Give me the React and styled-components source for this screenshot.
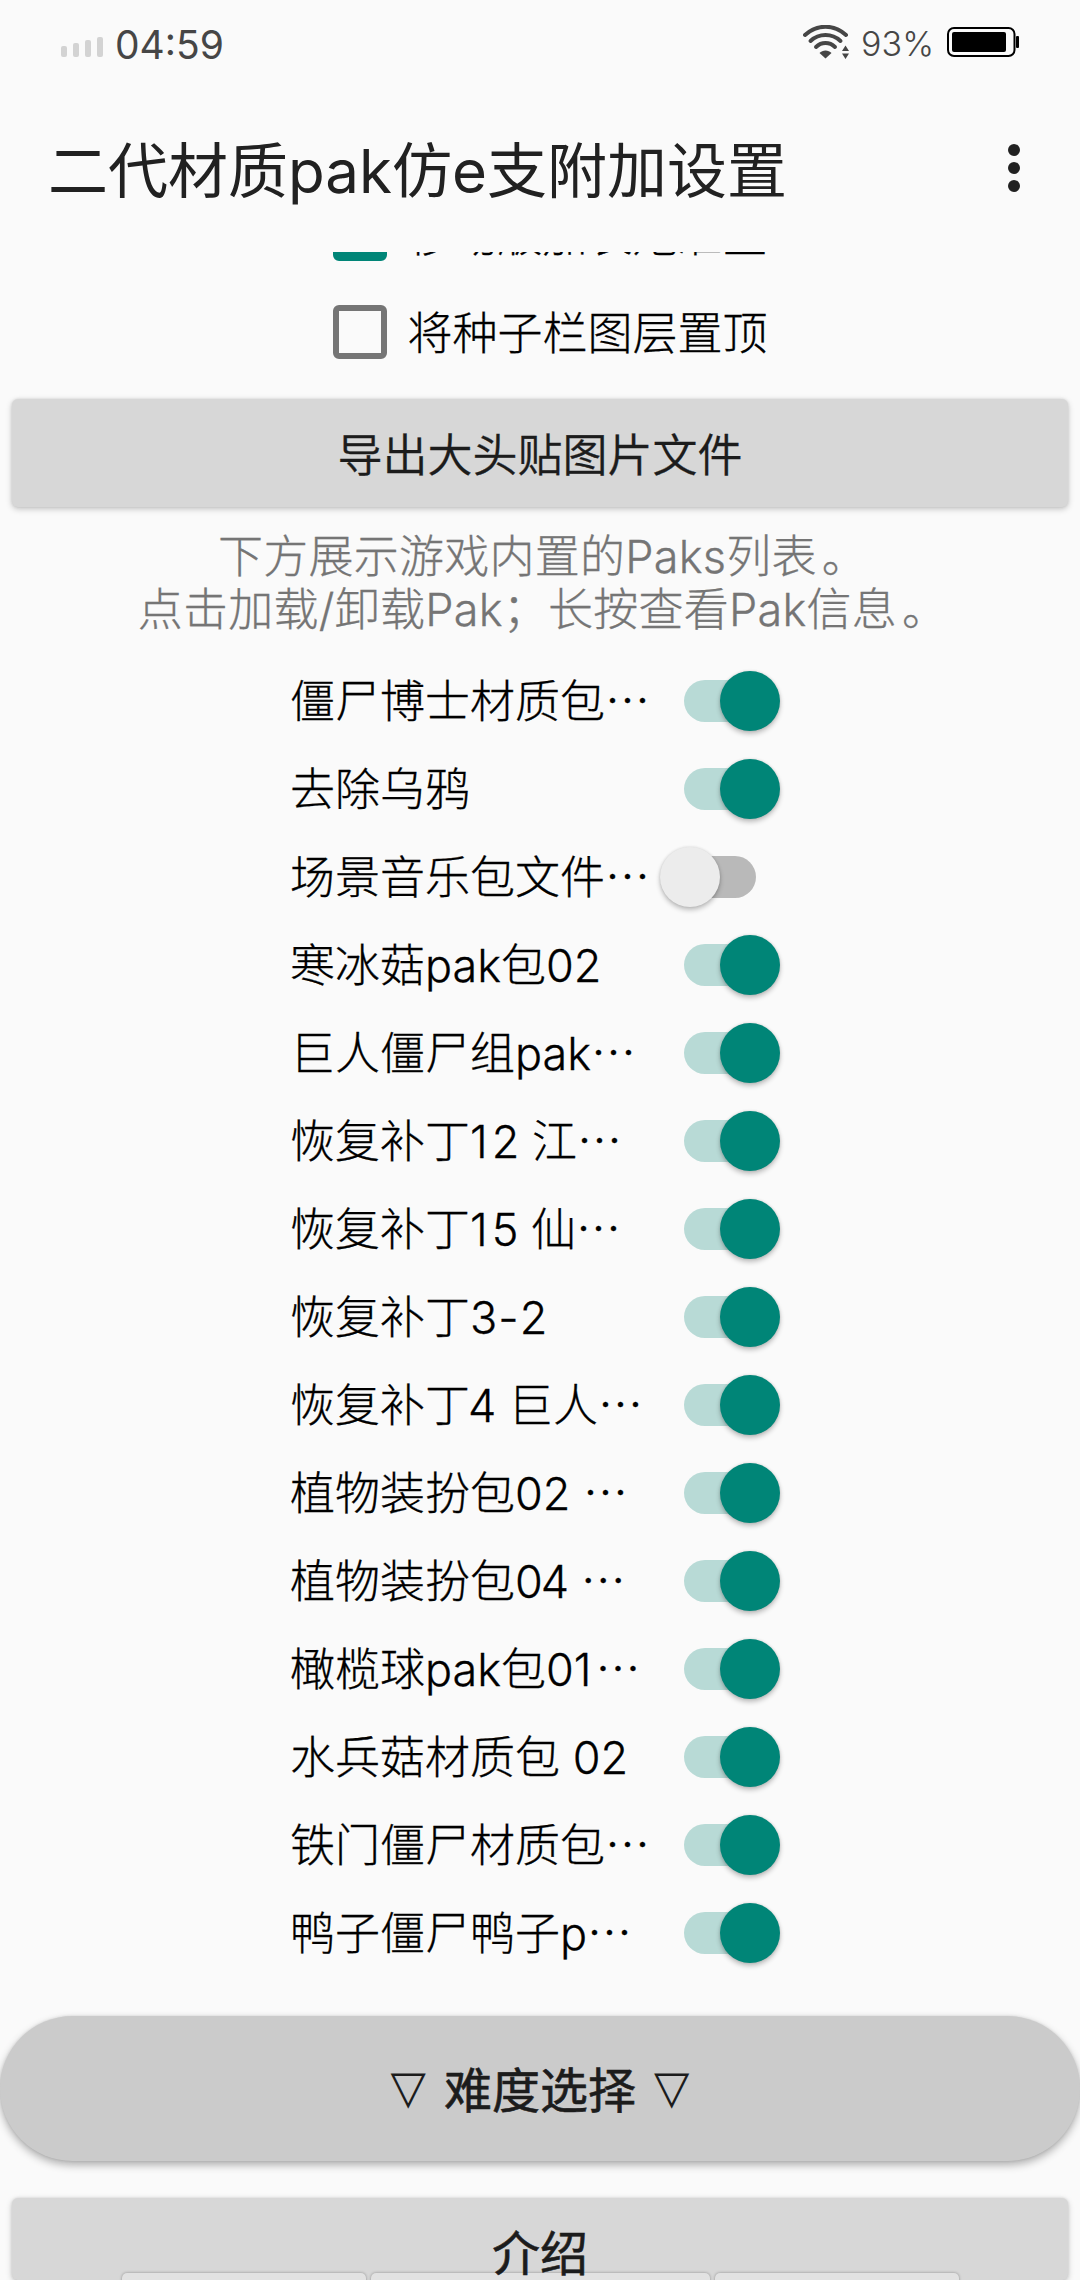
import React from 'react';
import styled, { createGlobalStyle } from 'styled-components';

const Global = createGlobalStyle`
  * { box-sizing: border-box; }
  html, body { margin: 0; padding: 0; background: #fafafa; }
  body { overflow: hidden; }
  button { font: inherit; border: 0; padding: 0; margin: 0; color: inherit; background: none; }
`;

const Screen = styled.div`
  width: 1080px;
  height: 2280px;
  display: flex;
  flex-direction: column;
  overflow: hidden;
  background: #fafafa;
  color: #000;
  font-family: Inter, 'Noto Sans CJK SC', sans-serif;
  font-weight: 300;
  font-size: 45px;
`;

const StatusBar = styled.header`
  flex: none;
  height: 84px;
  padding: 0 60px 0 61px;
  display: flex;
  align-items: center;
  justify-content: space-between;
  color: #464646;
`;

const StatusGroup = styled.div`
  display: flex;
  align-items: center;
`;

const Clock = styled.span`
  margin-left: 11px;
  padding-top: 5px;
  font-size: 39px;
  line-height: 48px;
  font-weight: 400;
`;

const Percent = styled.span`
  margin: 3px 13px 0 11px;
  font-size: 34px;
  line-height: 40px;
  font-weight: 350;
`;

const TitleBar = styled.div`
  flex: none;
  height: 168px;
  padding: 0 60px 0 48px;
  display: flex;
  align-items: center;
  justify-content: space-between;
  color: #212121;
`;

const Title = styled.h1`
  margin: 0;
  padding-top: 6px;
  font-size: 60px;
  font-weight: 400;
  line-height: 80px;
`;

const Overflow = styled.button`
  display: flex;
  flex-direction: column;
  gap: 6px;
`;

const Dot = styled.i`
  width: 12px;
  height: 12px;
  border-radius: 50%;
  background: #212121;
`;

const Viewport = styled.main`
  flex: 1;
  min-height: 0;
  overflow: hidden;
  display: flex;
  flex-direction: column;
`;

const Options = styled.div`
  flex: none;
  margin-top: -67px;
  display: flex;
  flex-direction: column;
  align-items: center;
`;

const Option = styled.label`
  height: 98px;
  width: 435px;
  display: flex;
  align-items: center;
  line-height: 60px;
  white-space: nowrap;
`;

const OptionText = styled.span`
  padding-top: 4px;
  -webkit-text-stroke: 0.3px currentColor;
`;

const Box = styled.span`
  flex: none;
  width: 54px;
  height: 54px;
  margin: 0 21px 0 10px;
  border-radius: 6px;
  border: 6px solid ${(p) => (p.$checked ? '#008577' : '#757575')};
  background: ${(p) => (p.$checked ? '#008577' : 'transparent')};
`;

const FlatButton = styled.button`
  flex: none;
  width: 1056px;
  height: ${(p) => p.$height}px;
  margin: ${(p) => p.$top}px 12px 0;
  border-radius: 6px;
  background: #d7d7d7;
  color: #1c1c1c;
  font-size: ${(p) => p.$size || 45}px;
  font-weight: ${(p) => p.$weight || 350};
  line-height: 64px;
  box-shadow: 0 2px 6px rgba(0, 0, 0, 0.22), 0 0 3px rgba(0, 0, 0, 0.1);
  display: flex;
  flex-direction: column;
  align-items: center;
`;

const ButtonLabel = styled.span`
  position: relative;
  z-index: 1;
  margin-top: ${(p) => p.$top}px;
  -webkit-text-stroke: ${(p) => p.$stroke}px currentColor;
`;

const Hint = styled.p`
  flex: none;
  margin: 23px 0 0;
  text-align: center;
  line-height: 53px;
  letter-spacing: 0.25px;
  color: #757575;
  -webkit-text-stroke: 0.3px currentColor;
`;

const FullStop = styled.span`
  margin: 0 -5px 0 5px;
`;

const PakList = styled.ul`
  flex: none;
  list-style: none;
  margin: 21px 0 0;
  padding: 0 0 0 290px;
`;

const PakRow = styled.li`
  height: 88px;
  display: flex;
  align-items: center;
`;

const PakName = styled.span`
  width: 370px;
  padding-top: 2px;
  line-height: 60px;
  white-space: pre;
  -webkit-text-stroke: 0.3px currentColor;
`;

const Glyph = styled.span`
  margin: 0 ${(p) => p.$after}px 0 ${(p) => p.$before}px;
`;

const Ellipsis = styled.span`
  font-family: 'Noto Sans CJK SC', sans-serif;
  line-height: 1;
`;

const Track = styled.span`
  width: 72px;
  height: 42px;
  margin-left: 24px;
  border-radius: 21px;
  display: flex;
  align-items: center;
  background: ${(p) => (p.$on ? '#b8dad6' : '#b9b9b9')};
`;

const Thumb = styled.span`
  flex: none;
  width: 60px;
  height: 60px;
  margin-left: ${(p) => (p.$on ? 36 : -24)}px;
  border-radius: 50%;
  background: ${(p) => (p.$on ? '#008577' : '#ececec')};
  box-shadow: 0 3px 5px rgba(0, 0, 0, 0.24), 0 0 3px rgba(0, 0, 0, 0.12);
`;

const Pill = styled.button`
  flex: none;
  height: 145px;
  margin-top: 39px;
  padding-bottom: 4px;
  border-radius: 73px;
  background: #cbcbcb;
  color: #1c1c1c;
  font-size: 48px;
  font-weight: 400;
  box-shadow: 0 4px 8px rgba(0, 0, 0, 0.3), 0 0 3px rgba(0, 0, 0, 0.1);
  display: flex;
  align-items: center;
  justify-content: center;
  gap: 18px;
`;

const PillLabel = styled.span`
  -webkit-text-stroke: 0.6px currentColor;
`;

const Triangle = styled.span`
  font-family: 'DejaVu Sans', sans-serif;
  font-size: 46px;
`;

const Tabs = styled.div`
  flex: none;
  align-self: center;
  width: 837px;
  margin-top: -7px;
  height: 30px;
  display: grid;
  grid-template-columns: 244px 339px 244px;
  gap: 5px;
`;

const Tab = styled.span`
  border-radius: 5px;
  background: #e2e2e2;
  box-shadow: 0 0 3px rgba(0, 0, 0, 0.35);
`;

const paks = [
  { name: '僵尸博士材质包', cut: true, on: true },
  { name: '去除乌鸦', on: true },
  { name: '场景音乐包文件', cut: true, on: false },
  { name: '寒冰菇pak包02', on: true },
  { name: '巨人僵尸组pak', cut: true, on: true },
  { name: '恢复补丁12 江', cut: true, on: true },
  { name: '恢复补丁15 仙', cut: true, on: true },
  { name: '恢复补丁3-2', on: true },
  { name: '恢复补丁4 巨人', cut: true, on: true },
  { name: '植物装扮包02 ', cut: true, on: true },
  { name: '植物装扮包04 ', cut: true, on: true },
  { name: '橄榄球pak包01', cut: true, on: true },
  { name: '水兵菇材质包 02', on: true },
  { name: '铁门僵尸材质包', cut: true, on: true },
  { name: '鸭子僵尸鸭子p', cut: true, on: true },
];

// Side bearings, in pixels, for the characters that need looser or tighter spacing.
const bearings = { 1: [0, 4], 4: [-2, -1], '-': [1, 1] };

const spaced = (name) =>
  name.split(/([14-])/).map((part, i) =>
    bearings[part] ? (
      <Glyph key={i} $before={bearings[part][0]} $after={bearings[part][1]}>
        {part}
      </Glyph>
    ) : (
      part
    ),
  );

const Signal = () => (
  <svg width="43" height="20" viewBox="0 0 43 20" fill="#d3d3d3">
    <rect x="0" y="9" width="6" height="11" rx="2" />
    <rect x="12" y="6" width="6" height="14" rx="2" />
    <rect x="24" y="3" width="6" height="17" rx="2" />
    <rect x="36" y="0" width="6" height="20" rx="2" />
  </svg>
);

const SignalSlot = styled.span`
  display: flex;
  padding-top: 10px;
`;

const Wifi = () => (
  <svg width="47" height="34" viewBox="0 0 47 34" fill="none" stroke="#464646" strokeWidth="4" strokeLinecap="round">
    <path d="M2 10C14 -1 31 -1 43 10" />
    <path d="M7.500 16C16 8 29 8 37.500 16" />
    <path d="M13 22C18.500 16.800 26.500 16.800 32 22" />
    <path d="M16.500 28C19.500 24.500 25.500 24.500 28.500 28L22.500 33.500Z" fill="#464646" stroke="none" />
    <path d="M42.500 20.500L46 26H39ZM42.500 34L46 28.500H39Z" fill="#464646" stroke="none" />
  </svg>
);

const Battery = () => (
  <svg width="73" height="30" viewBox="0 0 73 30">
    <rect x="1" y="1" width="66.500" height="28" rx="6" fill="none" stroke="#000" strokeWidth="2" />
    <rect x="5" y="5" width="54" height="20" rx="2" />
    <rect x="69" y="9" width="3" height="12" rx="1" />
  </svg>
);

export default function App() {
  return (
    <>
      <Global />
      <Screen lang="zh-CN">
        <StatusBar>
          <StatusGroup>
            <SignalSlot>
              <Signal />
            </SignalSlot>
            <Clock>04:59</Clock>
          </StatusGroup>
          <StatusGroup>
            <Wifi />
            <Percent>93%</Percent>
            <Battery />
          </StatusGroup>
        </StatusBar>
        <TitleBar>
          <Title>二代材质pak仿e支附加设置</Title>
          <Overflow aria-label="更多">
            <Dot />
            <Dot />
            <Dot />
          </Overflow>
        </TitleBar>
        <Viewport>
          <Options>
            <Option>
              <Box $checked />
              <OptionText>移动版加农炮准星</OptionText>
            </Option>
            <Option>
              <Box />
              <OptionText>将种子栏图层置顶</OptionText>
            </Option>
          </Options>
          <FlatButton $height={108} $top={18}>
            <ButtonLabel $top={25} $stroke={0.3}>导出大头贴图片文件</ButtonLabel>
          </FlatButton>
          <Hint>
            下方展示游戏内置的Paks列表<FullStop>。</FullStop>
            <br />
            点击加载/卸载Pak；长按查看Pak信息<FullStop>。</FullStop>
          </Hint>
          <PakList>
            {paks.map((pak) => (
              <PakRow key={pak.name}>
                <PakName>
                  {spaced(pak.name)}
                  {pak.cut && <Ellipsis>…</Ellipsis>}
                </PakName>
                <Track $on={pak.on}>
                  <Thumb $on={pak.on} />
                </Track>
              </PakRow>
            ))}
          </PakList>
          <Pill>
            <Triangle>▽</Triangle>
            <PillLabel>难度选择</PillLabel>
            <Triangle>▽</Triangle>
          </Pill>
          <FlatButton $height={82} $top={37} $size={48} $weight={400}>
            <ButtonLabel $top={24} $stroke={0.6}>介绍</ButtonLabel>
          </FlatButton>
          <Tabs>
            <Tab />
            <Tab />
            <Tab />
          </Tabs>
        </Viewport>
      </Screen>
    </>
  );
}
